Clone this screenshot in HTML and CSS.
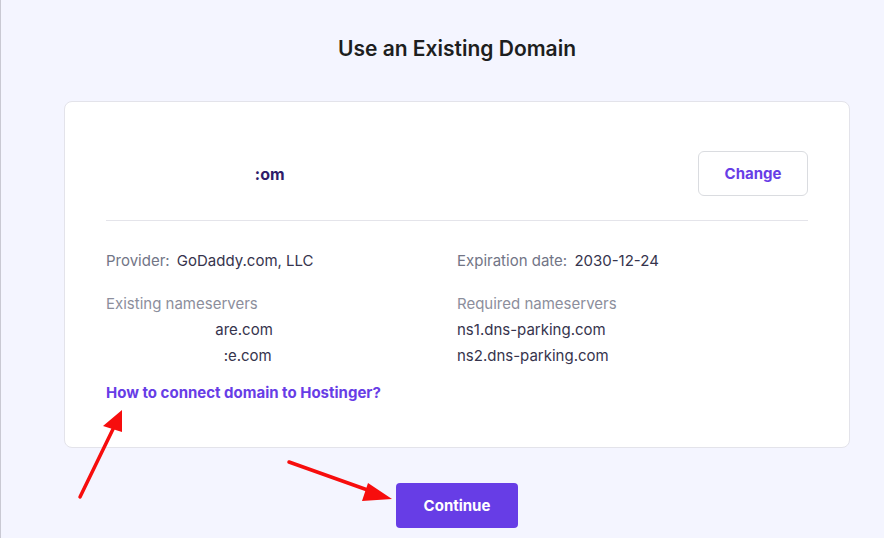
FILE: index.html
```html
<!DOCTYPE html>
<html>
<head>
<title>Use an Existing Domain</title>
<link rel="stylesheet" href="styles.css">
</head>
<body>
<div class="page">
  <h1 class="title">Use an Existing Domain</h1>

  <div class="card">
    <div class="domain-row">
      <span class="domain-name"><span class="hidden-part">mydomainnames.c</span>:om</span>
      <button class="change-button">Change</button>
    </div>

    <div class="details">
      <div class="detail-col">
        <p class="info-line"><span class="label">Provider:</span> <span class="value">GoDaddy.com, LLC</span></p>
        <p class="ns-label">Existing nameservers</p>
        <p class="ns-value"><span class="hidden-part">abcd.ns.cloudfl</span>are.com</p>
        <p class="ns-value"><span class="hidden-part">abcd.ns.cloudfla</span>:e.com</p>
      </div>
      <div class="detail-col">
        <p class="info-line"><span class="label">Expiration date:</span> <span class="value">2030-12-24</span></p>
        <p class="ns-label">Required nameservers</p>
        <p class="ns-value">ns1.dns-parking.com</p>
        <p class="ns-value">ns2.dns-parking.com</p>
      </div>
    </div>

    <a class="help-link" href="#">How to connect domain to Hostinger?</a>
  </div>

  <div class="actions">
    <button class="continue-button">Continue</button>
  </div>
</div>

<!-- annotation arrows drawn over the screenshot -->
<svg class="arrows" width="884" height="538" viewBox="0 0 884 538">
  <line x1="80" y1="497" x2="114" y2="427" stroke="#f70d0d" stroke-width="3.5" stroke-linecap="round"/>
  <polygon points="122,410 103,426 122,432" fill="#f70d0d"/>
  <line x1="289" y1="462" x2="376" y2="493" stroke="#f70d0d" stroke-width="3.5" stroke-linecap="round"/>
  <polygon points="392,499 368,483 362,501" fill="#f70d0d"/>
</svg>
</body>
</html>
```

FILE: styles.css
```css
body {
  margin: 0;
  background-color: #f4f5ff;
  border-left: 1px solid #c9c9d3;
  font-family: Inter, "DejaVu Sans", sans-serif;
  color: #36344d;
  height: 538px;
  box-sizing: border-box;
  overflow: hidden;
}

.page {
  width: 786px;
  margin-left: 63px;
  padding-top: 36px;
}

.title {
  margin: 0;
  text-align: center;
  font-size: 21px;
  font-weight: 600;
  color: #1d1e20;
  line-height: 26px;
  letter-spacing: 0;
}

.card {
  margin-top: 39px;
  background-color: #fff;
  border: 1px solid #e3e3ea;
  border-radius: 8px;
  padding: 49px 41px 45px 41px;
}

.domain-row {
  display: flex;
  align-items: center;
  justify-content: space-between;
  padding-bottom: 24px;
  border-bottom: 1px solid #e4e4ea;
}

.domain-name {
  font-size: 16px;
  font-weight: 700;
  color: #2f1c6a;
}

.hidden-part {
  color: transparent;
}

.change-button {
  width: 110px;
  height: 45px;
  background-color: #fff;
  border: 1px solid #dadce0;
  border-radius: 6px;
  font-family: inherit;
  font-size: 15px;
  font-weight: 700;
  color: #673de6;
}

.details {
  display: grid;
  grid-template-columns: 1fr 1fr;
  padding-top: 29px;
}

.detail-col p {
  margin: 0;
  font-size: 15px;
}

.info-line {
  line-height: 22px;
  margin-bottom: 19px !important;
}

.label {
  color: #727586;
}

.value {
  color: #36344d;
  margin-left: 3px;
}

.ns-label {
  color: #8c8e9c;
  line-height: 26px;
}

.ns-value {
  color: #36344d;
  line-height: 26px;
}

.help-link {
  display: inline-block;
  margin-top: 14px;
  font-size: 15px;
  font-weight: 700;
  color: #673de6;
  text-decoration: none;
}

.actions {
  display: flex;
  justify-content: center;
  margin-top: 35px;
}

.continue-button {
  width: 122px;
  height: 45px;
  background-color: #673de6;
  border: none;
  border-radius: 4px;
  font-family: inherit;
  font-size: 15px;
  font-weight: 700;
  color: #fff;
}

.arrows {
  position: absolute;
  left: 0;
  top: 0;
  pointer-events: none;
}
```
